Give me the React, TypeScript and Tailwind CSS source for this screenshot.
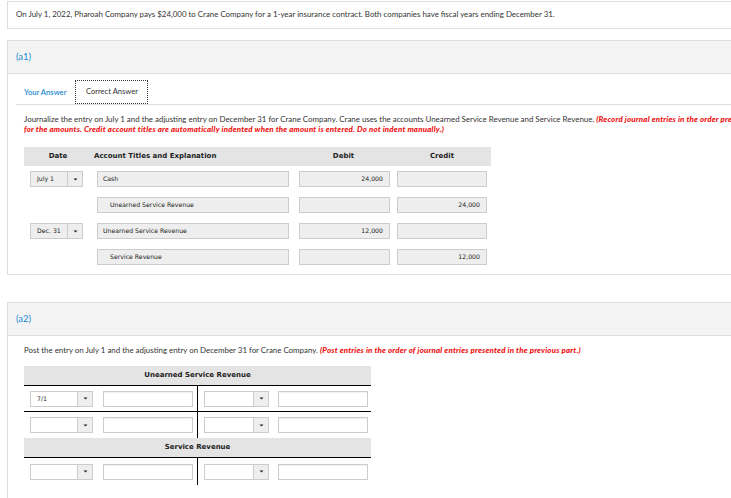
import React from 'react';

const Arrow: React.FC = () => (
  <svg width="5" height="3" viewBox="0 0 5 3" className="block">
    <path d="M0.5 0.5 H4.5 L2.5 2.5 Z" fill="#222" />
  </svg>
);

interface DateSelectProps {
  value?: string;
  textWidth: string;
  white?: boolean;
}

const DateSelect: React.FC<DateSelectProps> = ({ value, textWidth, white }) => (
  <div className="flex h-[16px]">
    <div
      className={`${textWidth} ${white ? 'bg-white' : 'bg-[#eeeeee]'} border border-[#cccccc] flex items-center pl-[6px] text-[6.2px] text-[#222] font-['DejaVu_Sans',sans-serif]`}
    >
      {value}
    </div>
    <div className="w-[15px] bg-[#eeeeee] border border-[#cccccc] border-l-0 flex items-center justify-center">
      <Arrow />
    </div>
  </div>
);

interface FieldProps {
  value?: string;
  width: string;
  indent?: boolean;
  right?: boolean;
  white?: boolean;
}

const Field: React.FC<FieldProps> = ({ value, width, indent, right, white }) => (
  <div
    className={`${width} h-[16px] border border-[#cccccc] flex items-center text-[6.2px] text-[#222] font-['DejaVu_Sans',sans-serif] ${
      white ? 'bg-white shadow-[inset_0_1px_1px_rgba(0,0,0,0.06)]' : 'bg-[#eeeeee]'
    } ${right ? 'justify-end pr-[6px]' : indent ? 'pl-[12px]' : 'pl-[5px]'}`}
  >
    {value}
  </div>
);

const journal = [
  { date: 'July 1', account: 'Cash', debit: '24,000', credit: '' },
  { date: '', account: 'Unearned Service Revenue', debit: '', credit: '24,000', indent: true },
  { date: 'Dec. 31', account: 'Unearned Service Revenue', debit: '12,000', credit: '' },
  { date: '', account: 'Service Revenue', debit: '', credit: '12,000', indent: true },
];

const TCells: React.FC<{ date?: string }> = ({ date }) => (
  <>
    <div className="w-[174px] flex items-center pl-[6px] gap-[10px] border-r-[1.5px] border-black">
      <DateSelect value={date} textWidth="w-[48px]" white />
      <Field width="w-[90px]" white />
    </div>
    <div className="flex items-center pl-[6px] gap-[9px]">
      <DateSelect textWidth="w-[50px]" white />
      <Field width="w-[90px]" white />
    </div>
  </>
);

const THeader: React.FC<{ title: string }> = ({ title }) => (
  <div className="h-[20px] bg-[#e4e4e4] border-b-[1.5px] border-black flex items-center justify-center text-[7px] font-bold text-[#222] font-['DejaVu_Sans',sans-serif]">
    {title}
  </div>
);

const redText = "text-[#ee1111] font-black italic tracking-[0.2px]";

export default function App() {
  return (
    <div className="w-[731px] h-[498px] overflow-hidden bg-white font-['Lato',sans-serif] text-[#333]">
      <div className="w-[900px] pl-[7px] pt-[1px]">
        <div className="h-[28px] border border-[#dddddd] flex items-center pl-[8px] text-[7.9px] whitespace-nowrap">
          On July 1, 2022, Pharoah Company pays $24,000 to Crane Company for a 1-year insurance contract. Both companies have fiscal years ending December 31.
        </div>

        <div className="mt-[11px] border border-[#dddddd] border-r-0">
          <div className="h-[33px] bg-[#f3f3f3] border-b border-[#dddddd] flex items-center pl-[8px] text-[9.5px] text-[#1c8bd1]">
            (a1)
          </div>
          <div className="pb-[9px]">
            <div className="ml-[8px] mt-[7px] border-b border-[#dddddd] flex items-end h-[24px]">
              <div className="pl-[8px] pr-[9px] h-[23px] flex items-center text-[7.6px] font-semibold text-[#1c8bd1]">
                Your Answer
              </div>
              <div className="h-[24px] w-[73px] border border-dotted border-[#333] flex items-center justify-center text-[7.6px] text-[#333]">
                Correct Answer
              </div>
            </div>

            <div className="pl-[16px] pt-[9px] text-[7.9px] leading-[10px] whitespace-nowrap">
              <div>
                Journalize the entry on July 1 and the adjusting entry on December 31 for Crane Company. Crane uses the accounts Unearned Service Revenue and Service Revenue.{' '}
                <span className={redText}>
                  (Record journal entries in the order presented in the problem.
                </span>
              </div>
              <div className={redText}>
                for the amounts. Credit account titles are automatically indented when the amount is entered. Do not indent manually.)
              </div>
            </div>

            <div className="ml-[16px] mt-[13px] w-[467px]">
              <div className="h-[19px] bg-[#e4e4e4] flex items-center text-[7px] font-bold text-[#222] font-['DejaVu_Sans',sans-serif]">
                <div className="w-[68px] text-center">Date</div>
                <div className="w-[202px] pl-[2px]">Account Titles and Explanation</div>
                <div className="w-[99px] text-center">Debit</div>
                <div className="w-[98px] text-center">Credit</div>
              </div>
              <div className="flex flex-col gap-[10px] pt-[5px]">
                {journal.map((row, i) => (
                  <div key={i} className="flex items-center h-[16px]">
                    <div className="w-[73px] pl-[6px]">
                      {row.date && <DateSelect value={row.date} textWidth="w-[38px]" />}
                    </div>
                    <Field value={row.account} width="w-[192px]" indent={row.indent} />
                    <div className="w-[10px]" />
                    <Field value={row.debit} width="w-[91px]" right />
                    <div className="w-[7px]" />
                    <Field value={row.credit} width="w-[90px]" right />
                  </div>
                ))}
              </div>
            </div>
          </div>
        </div>

        <div className="mt-[27px] border border-[#dddddd] border-r-0 h-[300px]">
          <div className="h-[33px] bg-[#f3f3f3] border-b border-[#dddddd] flex items-center pl-[8px] text-[9.5px] text-[#1c8bd1]">
            (a2)
          </div>
          <div className="pl-[16px] pt-[9px] text-[7.9px] leading-[10px] whitespace-nowrap">
            Post the entry on July 1 and the adjusting entry on December 31 for Crane Company.{' '}
            <span className={redText}>
              (Post entries in the order of journal entries presented in the previous part.)
            </span>
          </div>
          <div className="ml-[16px] mt-[11px] w-[347px]">
            <THeader title="Unearned Service Revenue" />
            <div className="flex h-[26px] border-b-[1.5px] border-black">
              <TCells date="7/1" />
            </div>
            <div className="flex h-[26px]">
              <TCells />
            </div>
            <THeader title="Service Revenue" />
            <div className="flex h-[27px]">
              <TCells />
            </div>
          </div>
        </div>
      </div>
    </div>
  );
}
